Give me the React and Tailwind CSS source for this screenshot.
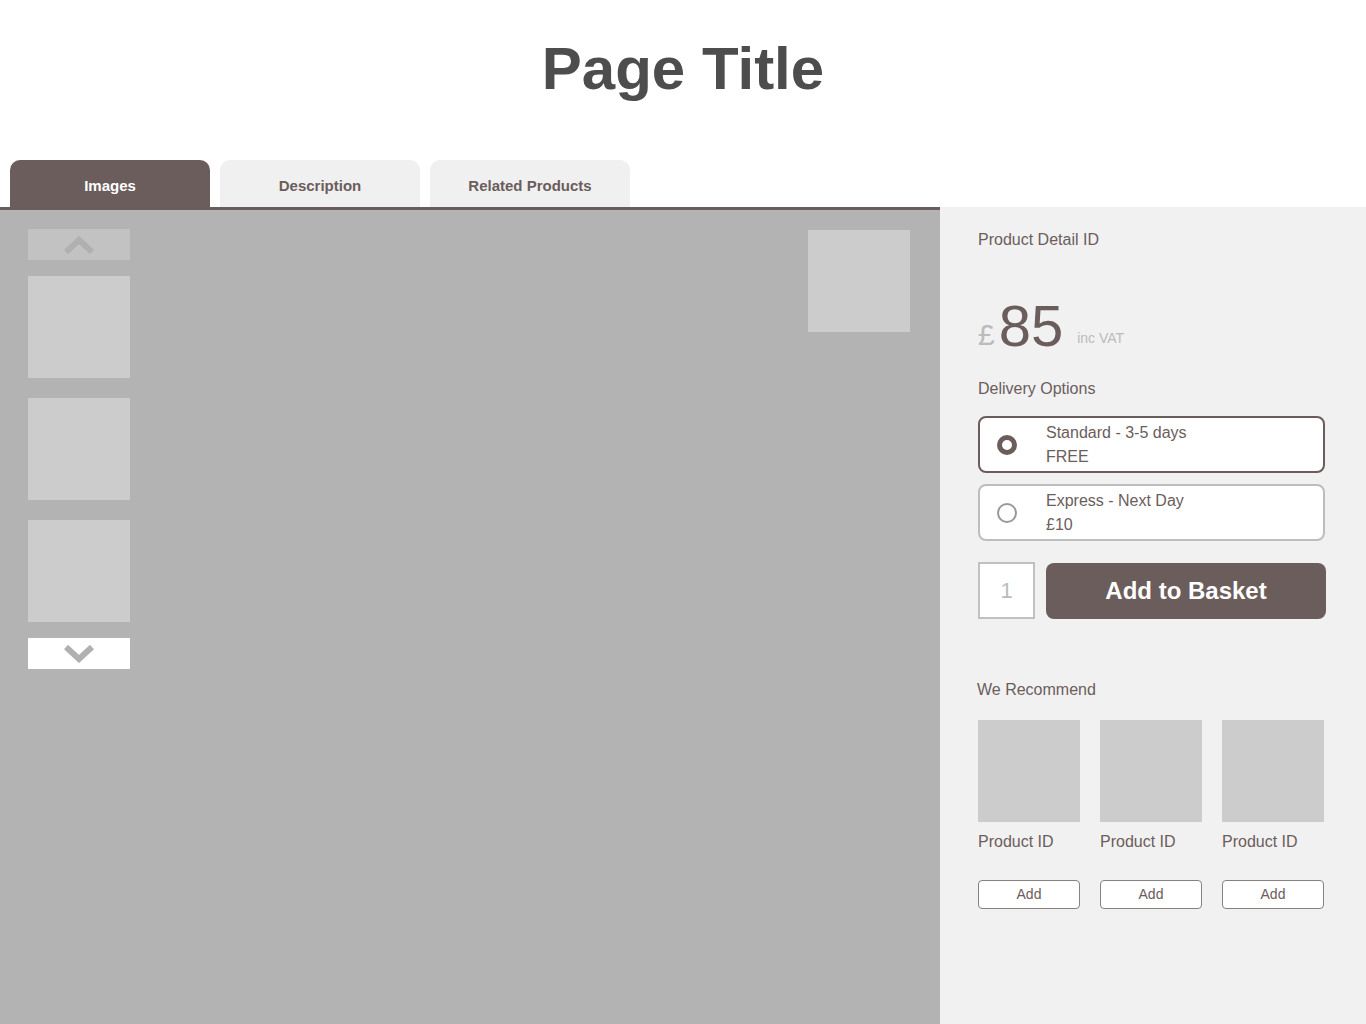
const FONT = { fontFamily: '"Liberation Sans", Arial, sans-serif' }

function Radio({ checked }) {
  return checked ? (
    <span className="block w-5 h-5 rounded-full border-[5px] border-[#6b5d5c] bg-white" />
  ) : (
    <span className="block w-5 h-5 rounded-full border-2 border-[#999] bg-white" />
  )
}

function DeliveryOption({ title, price, checked }) {
  return (
    <div
      className={
        'flex items-center h-[57px] w-[347px] rounded-lg border-2 bg-white ' +
        (checked ? 'border-[#6b5d5c]' : 'border-[#bdbdbd]')
      }
    >
      <div className="w-[66px] pl-[17px]">
        <Radio checked={checked} />
      </div>
      <div className="text-[16px] leading-[24px] text-[#6b5d5c]">
        <div>{title}</div>
        <div>{price}</div>
      </div>
    </div>
  )
}

function Recommended() {
  return (
    <div className="flex flex-col">
      <div className="w-[102px] h-[102px] bg-[#cccccc]" />
      <div className="mt-[10px] text-[16px] leading-[20px] text-[#6b5d5c]">Product ID</div>
      <button className="mt-[28px] w-[102px] h-[29px] bg-white border border-[#8a8080] rounded-[4px] text-[14px] text-[#6b5d5c]">
        Add
      </button>
    </div>
  )
}

export default function App() {
  const tabs = ['Images', 'Description', 'Related Products']
  return (
    <div className="w-[1366px] h-[1024px] bg-white overflow-hidden flex flex-col" style={FONT}>
      <h1 className="h-[160px] pt-[34px] text-center text-[60px] leading-[70px] font-bold text-[#4d4d4d]">
        Page Title
      </h1>
      <div className="flex gap-[10px] pl-[10px] h-[47px]">
        {tabs.map((t, i) => (
          <div
            key={t}
            className={
              'w-[200px] h-[47px] rounded-t-[10px] flex items-center justify-center pt-[5px] text-[15px] font-bold ' +
              (i === 0 ? 'bg-[#6b5d5c] text-white' : 'bg-[#f0f0f0] text-[#6b5d5c]')
            }
          >
            {t}
          </div>
        ))}
      </div>
      <div className="flex flex-1">
        <div className="w-[940px] flex flex-col">
          <div className="h-[3px] bg-[#6b5d5c]" />
          <div className="flex-1 bg-[#b3b3b3] flex justify-between pl-[28px] pr-[30px] pt-[19px]">
            <div className="flex flex-col w-[102px]">
              <div className="h-[31px] bg-[#c2c2c2] flex items-center justify-center">
                <svg width="30" height="18" viewBox="0 0 30 18">
                  <path d="M2 16 L15 4 L28 16" fill="none" stroke="#b0b0b0" strokeWidth="6" />
                </svg>
              </div>
              <div className="mt-[16px] h-[102px] bg-[#cccccc]" />
              <div className="mt-[20px] h-[102px] bg-[#cccccc]" />
              <div className="mt-[20px] h-[102px] bg-[#cccccc]" />
              <div className="mt-[16px] h-[31px] bg-white flex items-center justify-center">
                <svg width="30" height="18" viewBox="0 0 30 18">
                  <path d="M2 2 L15 14 L28 2" fill="none" stroke="#b0b0b0" strokeWidth="6" />
                </svg>
              </div>
            </div>
            <div className="w-[102px] h-[102px] mt-[1px] bg-[#cccccc]" />
          </div>
        </div>
        <div className="flex-1 bg-[#f1f1f1] pl-[38px] pt-[23px] text-[#6b5d5c]">
          <div className="text-[16px] leading-[20px]">Product Detail ID</div>
          <div className="flex items-end mt-[46px] h-[60px]">
            <span className="text-[30px] leading-[30px] font-light text-[#bbbbbb] mb-[6px]">£</span>
            <span className="ml-[4px] text-[58px] leading-[60px] font-light">85</span>
            <span className="ml-[14px] text-[14px] leading-[14px] text-[#bbbbbb] mb-[11px]">inc VAT</span>
          </div>
          <div className="mt-[23px] text-[16px] leading-[20px]">Delivery Options</div>
          <div className="mt-[17px] flex flex-col gap-[11px]">
            <DeliveryOption title="Standard - 3-5 days" price="FREE" checked />
            <DeliveryOption title="Express - Next Day" price="£10" />
          </div>
          <div className="mt-[21px] flex gap-[11px] items-center">
            <div className="w-[57px] h-[57px] bg-white border-2 border-[#c0c0c0] flex items-center justify-center text-[22px] text-[#bbbbbb]">
              1
            </div>
            <button className="w-[280px] h-[56px] rounded-lg bg-[#6b5d5c] text-white text-[24px] font-bold">
              Add to Basket
            </button>
          </div>
          <div className="mt-[61px] -ml-[1px] text-[16px] leading-[20px]">We Recommend</div>
          <div className="mt-[20px] flex gap-[20px]">
            <Recommended />
            <Recommended />
            <Recommended />
          </div>
        </div>
      </div>
    </div>
  )
}
